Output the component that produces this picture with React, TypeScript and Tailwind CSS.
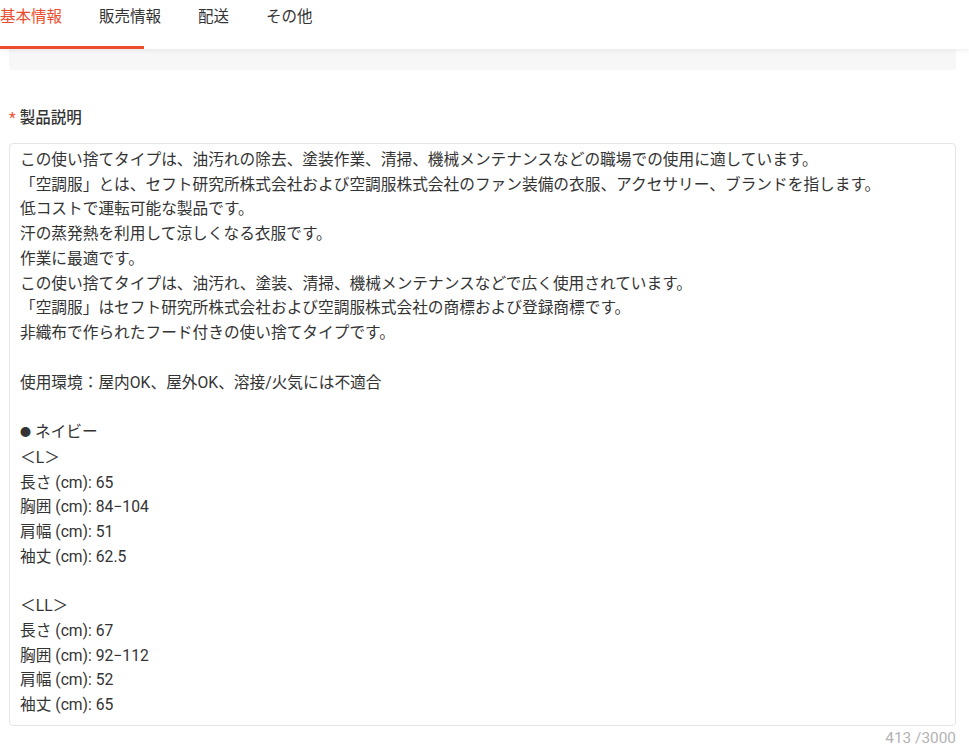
import React from "react";

const tabs = ["基本情報", "販売情報", "配送", "その他"];

const description = `この使い捨てタイプは、油汚れの除去、塗装作業、清掃、機械メンテナンスなどの職場での使用に適しています。
「空調服」とは、セフト研究所株式会社および空調服株式会社のファン装備の衣服、アクセサリー、ブランドを指します。
低コストで運転可能な製品です。
汗の蒸発熱を利用して涼しくなる衣服です。
作業に最適です。
この使い捨てタイプは、油汚れ、塗装、清掃、機械メンテナンスなどで広く使用されています。
「空調服」はセフト研究所株式会社および空調服株式会社の商標および登録商標です。
非織布で作られたフード付きの使い捨てタイプです。

使用環境：屋内OK、屋外OK、溶接/火気には不適合
`;

const sizes = `＜L＞
長さ (cm): 65
胸囲 (cm): 84−104
肩幅 (cm): 51
袖丈 (cm): 62.5

＜LL＞
長さ (cm): 67
胸囲 (cm): 92−112
肩幅 (cm): 52
袖丈 (cm): 65`;

const App = () => {
  return (
    <div
      className="min-h-screen w-full bg-white text-[#333]"
      style={{ fontFamily: 'Roboto, "Noto Sans CJK JP", sans-serif' }}
    >
      {/* Tab header */}
      <div className="relative z-10 bg-white shadow-[0_2px_4px_rgba(0,0,0,0.06)]">
        <div className="flex h-[46px] items-start gap-[37px] pt-[5px] text-[15.5px] leading-[24px]">
          {tabs.map((t, i) => (
            <div key={t} className={i === 0 ? "text-[#ee4d2d]" : "text-[#333]"}>
              {t}
            </div>
          ))}
        </div>
        <div className="h-[3px] w-[144px] bg-[#ee4d2d]" />
      </div>

      <div className="pl-[9px] pr-[13px]">
        {/* Gray strip under header */}
        <div className="h-[21px] rounded-b bg-[#f7f7f7]" />

        {/* Label */}
        <div className="mt-[37px] flex items-center text-[15.5px] leading-[22px]">
          <span className="mr-[4px] text-[#ee4d2d]">*</span>
          <span className="font-medium">製品説明</span>
        </div>

        {/* Textarea */}
        <div className="mt-[14px] rounded border border-[#e5e5e5] pl-[10px] pr-[10px] pt-[4px] pb-[7px] text-[15.7px] leading-[24.73px] whitespace-pre-wrap">
          {description}
          {"\n"}
          <span className="text-[11px] align-[1px]">●</span> ネイビー
          {"\n"}
          {sizes}
        </div>

        {/* Counter */}
        <div className="mt-[1px] text-right text-[15.4px] leading-[22px] text-[#b3b3b3]">
          413 /3000
        </div>
      </div>
    </div>
  );
};

export default App;
